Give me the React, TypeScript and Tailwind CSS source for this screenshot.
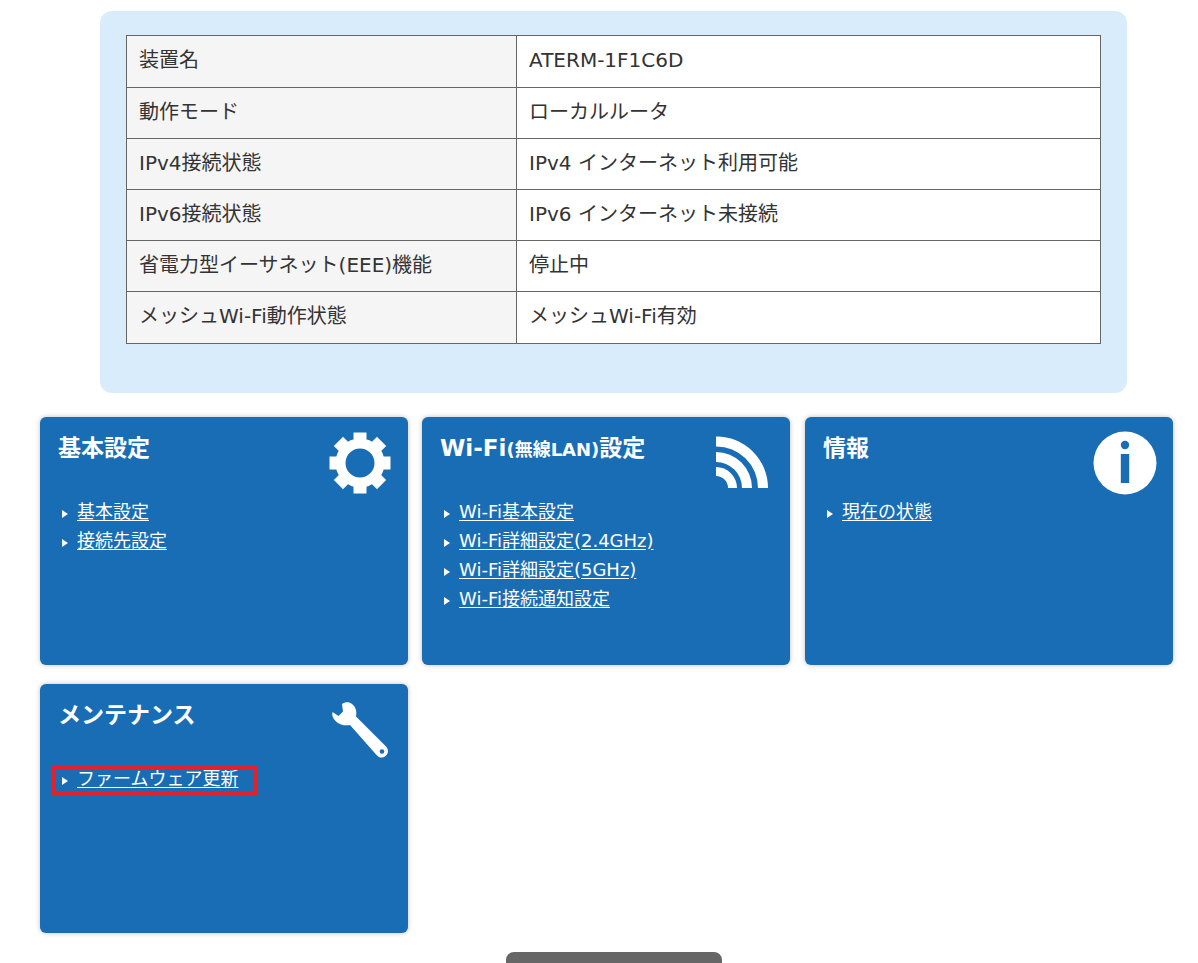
const FONT = "font-['DejaVu_Sans','Noto_Sans_CJK_JP',sans-serif]";

const STATUS_ROWS = [
  ['装置名', 'ATERM-1F1C6D'],
  ['動作モード', 'ローカルルータ'],
  ['IPv4接続状態', 'IPv4 インターネット利用可能'],
  ['IPv6接続状態', 'IPv6 インターネット未接続'],
  ['省電力型イーサネット(EEE)機能', '停止中'],
  ['メッシュWi-Fi動作状態', 'メッシュWi-Fi有効'],
];

function GearIcon() {
  const teeth = [0, 45, 90, 135, 180, 225, 270, 315];
  return (
    <svg width="62" height="62" viewBox="0 0 62 62" className="mr-[-1px] mt-[1px] block">
      {teeth.map((deg) => (
        <rect key={deg} x="24.5" y="0.5" width="13" height="12" fill="#fff" transform={`rotate(${deg} 31 31)`} />
      ))}
      <circle cx="31" cy="31" r="19.5" fill="none" stroke="#fff" strokeWidth="10" />
    </svg>
  );
}

function WifiIcon() {
  return (
    <svg width="52" height="52" viewBox="0 0 52 52" className="mr-[4px] mt-[5px] block">
      <path d="M0 0.5A51.5 51.5 0 0 1 52 52H42A41.5 41.5 0 0 0 0 10.5Z" fill="#fff" />
      <path d="M0 16A36 36 0 0 1 36 52H26A26 26 0 0 0 0 26Z" fill="#fff" />
      <path d="M0 31A21 21 0 0 1 21 52H12A12 12 0 0 0 0 40Z" fill="#fff" />
    </svg>
  );
}

function InfoIcon() {
  return (
    <svg width="64" height="64" viewBox="0 0 64 64" className="mr-[-2px] block">
      <circle cx="32" cy="32" r="31.5" fill="#fff" />
      <circle cx="32" cy="14" r="4.2" fill="#196db4" />
      <rect x="27.8" y="23" width="8.4" height="29" fill="#196db4" />
    </svg>
  );
}

function WrenchIcon() {
  return (
    <svg width="60" height="60" viewBox="0 0 60 60" className="mr-[-1px] mt-[3px] block">
      <path
        d="M11 3C14 1 18 0.5 21 3 25 6 26 11 25 15.5L55 45.5C58 48.5 57.5 52.5 54.5 55 51.5 57.5 48 57 45.5 54L19 24C14.5 25 9 24 5 20.5 2 17.5 0.5 14.5 1.5 11L7.5 15 12 10.5Z"
        fill="#fff"
      />
      <circle cx="51" cy="50.5" r="2.3" fill="#196db4" />
    </svg>
  );
}

function MenuLink({ label, highlighted }: { label: string; highlighted?: boolean }) {
  return (
    <li className="relative flex h-[29px] items-center pl-[4px]">
      {highlighted && (
        <span className="absolute left-[-6px] top-[2px] h-[30px] w-[205px] border-[4px] border-[#e6202a]" />
      )}
      <span className="mr-[9px] mt-[4px] h-0 w-0 border-y-[4px] border-l-[6px] border-y-transparent border-l-white" />
      <a href="#" className="text-[18px] leading-[24px] text-white underline underline-offset-2">
        {label}
      </a>
    </li>
  );
}

function MenuCard({
  title,
  icon,
  links,
  highlight,
}: {
  title: React.ReactNode;
  icon: React.ReactNode;
  links: string[];
  highlight?: string;
}) {
  return (
    <section className="w-[368px] rounded-[6px] bg-[#196db4] px-[18px] pt-[14px] shadow-[0_0_5px_rgba(0,0,0,0.25)]">
      <div className="flex h-[66px] items-start justify-between">
        <h2 className="text-[23px] font-bold leading-[34px] text-white">{title}</h2>
        {icon}
      </div>
      <ul>
        {links.map((link) => (
          <MenuLink key={link} label={link} highlighted={link === highlight} />
        ))}
      </ul>
    </section>
  );
}

export default function App() {
  return (
    <div className={`h-[963px] overflow-hidden bg-white pt-[11px] ${FONT}`}>
      <div className="ml-[100px] h-[382px] w-[1027px] rounded-[12px] bg-[#d9ecfb] px-[26px] pt-[24px]">
        <table className="w-[975px] table-fixed border-collapse text-[20px] text-[#333]">
          <tbody>
            {STATUS_ROWS.map(([name, value]) => (
              <tr key={name} className="h-[51px] first:h-[52px] last:h-[52px]">
                <th className="w-[390px] border border-[#666] bg-[#f5f5f5] px-[12px] pb-[3px] text-left font-normal">{name}</th>
                <td className="border border-[#666] bg-white px-[12px] pb-[3px]">{value}</td>
              </tr>
            ))}
          </tbody>
        </table>
      </div>

      <div className="ml-[40px] mt-[24px] grid w-[1133px] grid-cols-[382px_383px_368px] grid-rows-[248px_249px] gap-y-[19px]">
        <MenuCard title="基本設定" icon={<GearIcon />} links={['基本設定', '接続先設定']} />
        <MenuCard
          title={
            <>
              Wi-Fi<span className="text-[18px]">(無線LAN)</span>設定
            </>
          }
          icon={<WifiIcon />}
          links={['Wi-Fi基本設定', 'Wi-Fi詳細設定(2.4GHz)', 'Wi-Fi詳細設定(5GHz)', 'Wi-Fi接続通知設定']}
        />
        <MenuCard title="情報" icon={<InfoIcon />} links={['現在の状態']} />
        <MenuCard title="メンテナンス" icon={<WrenchIcon />} links={['ファームウェア更新']} highlight="ファームウェア更新" />
      </div>

      <div className="ml-[506px] mt-[19px] h-[40px] w-[216px] rounded-[8px] bg-[#666]" />
    </div>
  );
}
